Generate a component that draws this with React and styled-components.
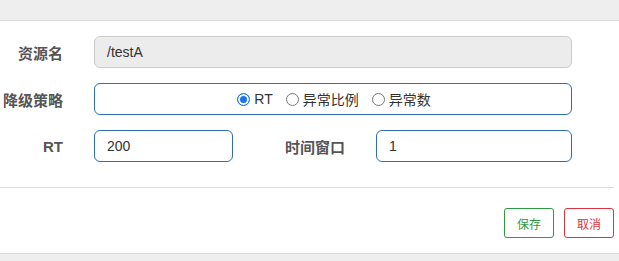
import React from "react";
import styled, { createGlobalStyle } from "styled-components";

const GlobalStyle = createGlobalStyle`
  html, body {
    margin: 0;
    padding: 0;
    background: #fff;
  }
  body {
    font-family: "Liberation Sans", "Noto Sans CJK SC", sans-serif;
    color: #333;
  }
`;

const Page = styled.div`
  width: 619px;
  height: 261px;
  display: flex;
  flex-direction: column;
  overflow: hidden;
`;

const TopBand = styled.div`
  height: 20px;
  flex-shrink: 0;
  background: #eeeeee;
  border-bottom: 1px solid #dadada;
`;

const Body = styled.div`
  display: flex;
  flex-direction: column;
  gap: 15px;
  padding: 15px 0 25px;
`;

const Row = styled.div`
  display: flex;
  align-items: center;
  height: 32px;
`;

const Label = styled.label`
  width: ${(p) => p.$width || 63}px;
  flex-shrink: 0;
  margin-right: 31px;
  text-align: right;
  font-size: 15px;
  font-weight: bold;
  color: #555;
  white-space: nowrap;
`;

const Input = styled.div`
  box-sizing: border-box;
  width: ${(p) => p.$width}px;
  height: ${(p) => p.$height || 32}px;
  display: flex;
  align-items: center;
  justify-content: ${(p) => (p.$center ? "center" : "flex-start")};
  padding: 0 12px;
  border-radius: 6px;
  border: 1px solid ${(p) => (p.$disabled ? "#cccccc" : "#2f6fb0")};
  background: ${(p) => (p.$disabled ? "#ececec" : "#fff")};
  font-size: 14px;
  color: #333;
`;

const RadioGroup = styled.div`
  display: flex;
  align-items: center;
  gap: 13px;
  margin-left: 2px;
`;

const RadioItem = styled.span`
  display: flex;
  align-items: center;
  gap: 4px;
  font-size: 14px;
  color: #333;
`;

const RadioDot = styled.span`
  box-sizing: border-box;
  width: 13px;
  height: 13px;
  border-radius: 50%;
  border: 1px solid ${(p) => (p.$checked ? "#1a73e8" : "#777")};
  background: ${(p) => (p.$checked ? "#1a73e8" : "#fff")};
  box-shadow: ${(p) => (p.$checked ? "inset 0 0 0 2px #fff" : "none")};
`;

const Footer = styled.div`
  margin-right: 5px;
  border-top: 1px solid #dddddd;
  padding: 20px 0 15px;
  display: flex;
  justify-content: flex-end;
  gap: 10px;
`;

const Button = styled.button`
  box-sizing: border-box;
  width: 50px;
  height: 30px;
  padding: 0;
  border-radius: 3px;
  background: #fff;
  font-family: "Liberation Sans", "Noto Sans CJK SC", sans-serif;
  font-size: 12px;
  cursor: pointer;
  color: ${(p) => (p.$variant === "danger" ? "#d9343f" : "#2e9a3f")};
  border: 1px solid ${(p) => (p.$variant === "danger" ? "#d9343f" : "#2e9a3f")};
`;

const BottomBand = styled.div`
  flex: 1;
  background: #eeeeee;
  border-top: 1px solid #dadada;
`;

const strategies = [
  { label: "RT", checked: true },
  { label: "异常比例" },
  { label: "异常数" },
];

export default function App() {
  return (
    <Page>
      <GlobalStyle />
      <TopBand />
      <Body>
        <Row>
          <Label>资源名</Label>
          <Input $width={478} $disabled>/testA</Input>
        </Row>
        <Row>
          <Label>降级策略</Label>
          <Input $width={478} $center>
            <RadioGroup>
              {strategies.map((s) => (
                <RadioItem key={s.label}>
                  <RadioDot $checked={s.checked} />
                  {s.label}
                </RadioItem>
              ))}
            </RadioGroup>
          </Input>
        </Row>
        <Row>
          <Label>RT</Label>
          <Input $width={139}>200</Input>
          <Label $width={112}>时间窗口</Label>
          <Input $width={196}>1</Input>
        </Row>
      </Body>
      <Footer>
        <Button $variant="success">保存</Button>
        <Button $variant="danger">取消</Button>
      </Footer>
      <BottomBand />
    </Page>
  );
}
